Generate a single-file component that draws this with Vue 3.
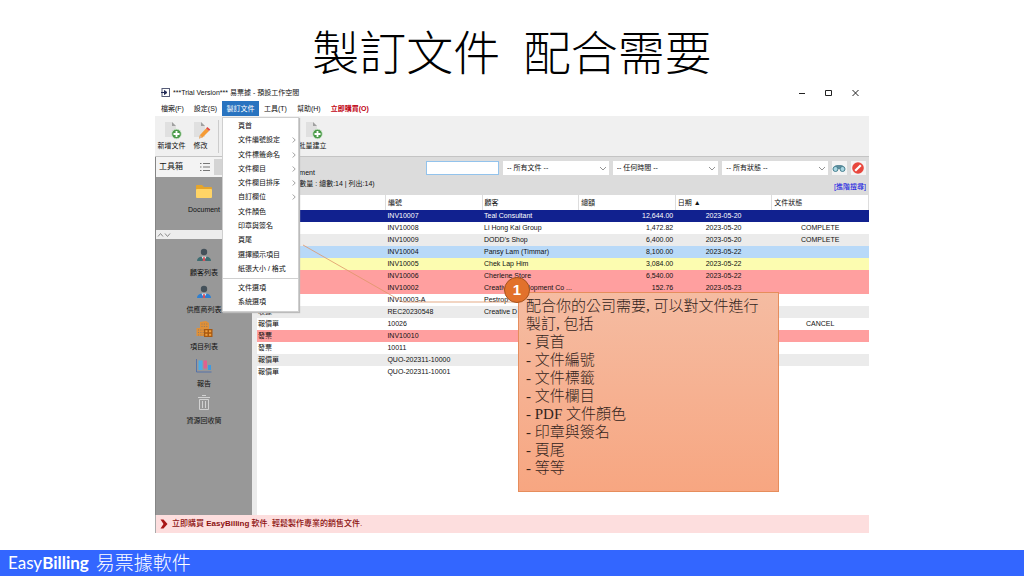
<script setup>
import { ref } from 'vue'

const menuItems = [
  { label: '頁首' },
  { label: '文件編號設定', sub: true },
  { label: '文件標籤命名', sub: true },
  { label: '文件欄目', sub: true },
  { label: '文件欄目排序', sub: true },
  { label: '自訂欄位', sub: true },
  { label: '文件顏色' },
  { label: '印章與簽名' },
  { label: '頁尾' },
  { label: '選擇顯示項目' },
  { label: '紙張大小 / 格式' }
]
const optionItems = ['文件選項', '系統選項']

const rows = [
  { type: '', no: 'INV10007', customer: 'Teal Consultant', total: '12,644.00', date: '2023-05-20', status: '', tone: 'selected' },
  { type: '', no: 'INV10008', customer: 'Li Hong Kai Group', total: '1,472.82', date: '2023-05-20', status: 'COMPLETE', tone: '' },
  { type: '', no: 'INV10009', customer: "DODD's Shop", total: '6,400.00', date: '2023-05-20', status: 'COMPLETE', tone: 'grey' },
  { type: '', no: 'INV10004', customer: 'Pansy Lam (Timmar)', total: '8,100.00', date: '2023-05-22', status: '', tone: 'blue' },
  { type: '', no: 'INV10005', customer: 'Chek Lap Him', total: '3,084.00', date: '2023-05-22', status: '', tone: 'yellow' },
  { type: '', no: 'INV10006', customer: 'Cherlene Store', total: '6,540.00', date: '2023-05-22', status: '', tone: 'red' },
  { type: '', no: 'INV10002', customer: 'Creative Development Co ...', total: '152.76', date: '2023-05-23', status: '', tone: 'red' },
  { type: '', no: 'INV10003-A', customer: 'Pestrop', total: '', date: '', status: '', tone: '' },
  { type: '收據', no: 'REC20230548', customer: 'Creative D', total: '', date: '', status: '', tone: 'grey' },
  { type: '報價單', no: '10026', customer: '', total: '', date: '', status: 'CANCEL', tone: '' },
  { type: '發票', no: 'INV10010', customer: '', total: '', date: '', status: '', tone: 'red' },
  { type: '發票', no: '10011', customer: '', total: '', date: '', status: '', tone: '' },
  { type: '報價單', no: 'QUO-202311-10000', customer: '', total: '', date: '', status: '', tone: 'grey' },
  { type: '報價單', no: 'QUO-202311-10001', customer: '', total: '', date: '', status: '', tone: '' }
]

const filters = ['-- 所有文件 --', '-- 任何時間 --', '-- 所有狀態 --']
const filterNames = ['文件', '時間', '狀態']
const points = ['頁首', '文件編號', '文件標籤', '文件欄目', 'PDF 文件顏色', '印章與簽名', '頁尾', '等等']
const keyword = ref('')
</script>

<template>
  <main class="slide">
    <h1 class="title">製訂文件&nbsp; 配合需要</h1>

    <section class="window">
      <header class="titlebar">
        <svg class="app-icon" viewBox="0 0 9 9"><rect x="1" y="0.500" width="7.500" height="8" fill="#fff" stroke="#555b77" /><path d="M0 4.500h4M3.500 2.500L6 4.500 3.500 6.500z" fill="#222a55" stroke="#222a55" /></svg>
        <span class="caption">***Trial Version*** 易票據 - 預設工作空間</span>
        <div class="controls">
          <button aria-label="最小化"><svg viewBox="0 0 10 10"><path d="M2 5.500h6" /></svg></button>
          <button aria-label="最大化"><svg viewBox="0 0 10 10"><path d="M1.500 2.500h6v5h-6z" /></svg></button>
          <button aria-label="關閉"><svg viewBox="0 0 10 10"><path d="M1.500 2l6 6M7.500 2l-6 6" /></svg></button>
        </div>
      </header>

      <nav class="menubar">
        <button class="wide">檔案(F)</button>
        <button class="wide">設定(S)</button>
        <div class="menu-host">
          <button class="active">製訂文件</button>
          <div class="popup">
            <div class="group main-group">
              <button v-for="m in menuItems" :key="m.label">
                <span>{{ m.label }}</span>
                <svg v-if="m.sub" viewBox="0 0 4 6"><path d="M0.700 0.500l2.500 2.500-2.500 2.500" /></svg>
              </button>
            </div>
            <div class="group option-group">
              <button v-for="o in optionItems" :key="o"><span>{{ o }}</span></button>
            </div>
          </div>
        </div>
        <button class="item">工具(T)</button>
        <button class="item">幫助(H)</button>
        <button class="item buy">立即購買(O)</button>
      </nav>

      <div class="toolbar">
        <button class="tool">
          <svg viewBox="0 0 20 20"><path d="M3 2h7l4 4v11H3z" fill="#e0e0e0" /><path d="M10 2l4 4h-4z" fill="#a0a0a0" /><circle cx="14.500" cy="14" r="4.800" fill="#4a9a48" stroke="#cfe6ce" stroke-width=".8" /><path d="M14.500 11v6M11.500 14h6" stroke="#fff" stroke-width="1.800" /></svg>
          <span>新增文件</span>
        </button>
        <button class="tool">
          <svg viewBox="0 0 20 20"><path d="M3 2h7l4 4v11H3z" fill="#e0e0e0" /><path d="M10 2l4 4h-4z" fill="#a0a0a0" /><path d="M9 15l6-6.500 3 2.500-6.500 6.500-3.500 1z" fill="#f59b35" /><path d="M15 8.500l1.300-1.500 3 2.500-1.300 1.500z" fill="#df4c45" /><path d="M9 15l2.500 2.500-3.500 1z" fill="#e0b48c" /></svg>
          <span>修改</span>
        </button>
        <span class="rule"></span>
        <button class="tool batch">
          <svg viewBox="0 0 20 20"><path d="M3 2h7l4 4v11H3z" fill="#e0e0e0" /><path d="M10 2l4 4h-4z" fill="#a0a0a0" /><circle cx="14.500" cy="14" r="4.800" fill="#4a9a48" stroke="#cfe6ce" stroke-width=".8" /><path d="M14.500 11v6M11.500 14h6" stroke="#fff" stroke-width="1.800" /></svg>
          <span>批量建立</span>
        </button>
      </div>

      <div class="body">
        <aside class="sidebar">
          <div class="side-head">
            <span>工具箱</span>
            <button class="list-btn" aria-label="清單"><svg viewBox="0 0 12 10"><path d="M4 1.500h7M4 5h7M4 8.500h7" stroke="#777" /><path d="M1 1.500h1.500M1 5h1.500M1 8.500h1.500" stroke="#777" /></svg></button>
            <span class="toggle"></span>
          </div>
          <div class="panel docs">
            <button class="side-item">
              <svg viewBox="0 0 18 18"><path d="M1 3q0-1 1-1h5l2 2h7q1 0 1 1v9H1z" fill="#e5a52b" /><path d="M1 7q0-1 1-1h14q1 0 1 1v7q0 1-1 1H2q-1 0-1-1z" fill="#ffd466" /></svg>
              <span>Document</span>
            </button>
          </div>
          <div class="splitter"><svg viewBox="0 0 14 6"><path d="M1 4.500l2.500-3 2.500 3M8 1.500l2.500 3 2.500-3" fill="none" stroke="#8b8b8b" /></svg></div>
          <div class="panel lists">
            <button class="side-item">
              <svg viewBox="0 0 18 18"><circle cx="9" cy="6" r="3.200" fill="#44515a" /><path d="M2 15q0-4 5-4.500h4q5 .5 5 4.500z" fill="#3f6d72" /><path d="M6.500 10.500h5L9 15z" fill="#eee" /><path d="M8.300 11h1.400l.6 4H7.700z" fill="#d4505a" /></svg>
              <span>顧客列表</span>
            </button>
            <button class="side-item">
              <svg viewBox="0 0 18 18"><circle cx="9" cy="6" r="3.200" fill="#44515a" /><path d="M2 15q0-4 5-4.500h4q5 .5 5 4.500z" fill="#2f7fd0" /><path d="M6.500 10.500h5L9 15z" fill="#eee" /><path d="M8.300 11h1.400l.6 4H7.700z" fill="#d4505a" /></svg>
              <span>供應商列表</span>
            </button>
            <button class="side-item">
              <svg viewBox="0 0 18 18"><path d="M5 2l6-1 3 2v6H5zM1.500 8h12v8h-12z" fill="#e09038" /><path d="M6.500 4h7M6.500 6.500h7M3 10h7M3 12.500h6M3 15h6" stroke="#8e7a66" stroke-dasharray="1 1.400" /><rect x="9" y="9" width="8.500" height="8" fill="#a8580f" /><path d="M10.300 10.300h2.200v2h-2.200zM14 10.300h2.200v2H14zM10.300 13.800h2.200v2h-2.200zM14 13.800h2.200v2H14z" fill="#f0a040" /></svg>
              <span>項目列表</span>
            </button>
            <button class="side-item">
              <svg viewBox="0 0 18 18"><path d="M1.500 2v13h15" fill="none" stroke="#5673a8" /><path d="M3.500 3.500h4v9.500h-4z" fill="#4cace8" /><path d="M8.500 3.500h3.500v8h-3.500z" fill="#e0608f" /><path d="M13 8h3v5h-3z" fill="#3f9ae0" /></svg>
              <span>報告</span>
            </button>
            <button class="side-item">
              <svg viewBox="0 0 18 18"><path d="M3 3.500h12M7 1.500h4M4.500 5.500h9v10h-9zM7.500 7v7M10.500 7v7" fill="none" stroke="#d2d2d2" /></svg>
              <span>資源回收筒</span>
            </button>
          </div>
        </aside>

        <section class="content">
          <div class="filterbar">
            <div class="summary">
              <span>Document</span>
              <span>項目(數量 : 總數:14 | 列出:14)</span>
            </div>
            <div class="filters">
              <div class="filter-row">
                <input v-model="keyword" class="search" type="text" aria-label="搜尋" />
                <div v-for="(f, i) in filters" :key="f" class="pick">
                  <select :aria-label="filterNames[i]"><option>{{ f }}</option></select>
                  <svg viewBox="0 0 8 5"><path d="M1 1l3 3 3-3" /></svg>
                </div>
                <button class="icon-btn" aria-label="尋找"><svg viewBox="0 0 14 14"><path d="M2 6q1-2 3-2h4q2 0 3 2v2H2z" fill="#5f8d9c" /><circle cx="3.500" cy="8" r="2.500" fill="#a9d6e2" stroke="#47808f" /><circle cx="10.500" cy="8" r="2.500" fill="#a9d6e2" stroke="#47808f" /></svg></button>
                <button class="icon-btn" aria-label="清除"><svg viewBox="0 0 14 14"><circle cx="7" cy="7" r="5.800" fill="#e8473d" /><path d="M4.200 9.800l5.600-5.600" stroke="#fff" stroke-width="2.200" /></svg></button>
              </div>
              <a class="advanced" href="#">[進階搜尋]</a>
            </div>
          </div>
          <table>
            <thead>
              <tr><th class="first"></th><th>編號</th><th>顧客</th><th>總額</th><th>日期 ▲</th><th>文件狀態</th></tr>
            </thead>
            <tbody>
              <tr v-for="r in rows" :key="r.no" :class="r.tone">
                <td>{{ r.type }}</td>
                <td>{{ r.no }}</td>
                <td class="customer">{{ r.customer }}</td>
                <td class="amount">{{ r.total }}</td>
                <td class="center">{{ r.date }}</td>
                <td class="center">{{ r.status }}</td>
              </tr>
            </tbody>
          </table>
        </section>
      </div>

      <footer class="notice">
        <svg viewBox="0 0 8 10"><path d="M0.500 0.500h3l4 4.500-4 4.500h-3l3-4.500z" fill="#a81616" /></svg>
        <span>立即購買 <b>EasyBilling</b> 軟件. 輕鬆製作專業的銷售文件.</span>
      </footer>

      <svg class="connector" viewBox="0 0 230 64"><path d="M1 2l100 57h117" /></svg>
      <div class="callout">
        <span class="badge">1</span>
        <p>配合你的公司需要, 可以對文件進行製訂, 包括</p>
        <p v-for="p in points" :key="p">- {{ p }}</p>
      </div>
    </section>

    <footer class="brand"><span>Easy<b>Billing</b></span><span class="zh">易票據軟件</span></footer>
  </main>
</template>

<style>
body { margin: 0; background: #fff; }
</style>

<style scoped>
* { box-sizing: border-box; }
button, input, select { font: inherit; color: inherit; margin: 0; padding: 0; border: 0; background: none; border-radius: 0; }
button { cursor: pointer; white-space: nowrap; }
svg { display: block; flex: none; }
p { margin: 0; }

.slide {
  min-height: 100vh;
  display: flex;
  flex-direction: column;
  background: #fff;
  color: #111;
  font-family: "Liberation Sans", "Noto Sans CJK TC", sans-serif;
}
.title {
  margin: 0;
  padding-top: 23px;
  height: 84px;
  text-align: center;
  font: 300 47px/62px "Liberation Serif", "Noto Sans CJK TC", sans-serif;
  color: #000;
}
.window {
  position: relative;
  flex: 1;
  display: flex;
  flex-direction: column;
  margin: 0 155px 17px;
  font-size: 7px;
  line-height: 12px;
}
.titlebar { display: flex; align-items: center; height: 17px; padding-left: 6px; }
.app-icon { width: 9px; height: 9px; margin-right: 3px; }
.controls { margin-left: auto; display: flex; gap: 17px; padding-right: 8px; }
.controls svg { width: 10px; height: 10px; fill: none; stroke: #222; }

.menubar { display: flex; height: 15px; padding-left: 1px; }
.menubar > button, .active { height: 15px; }
.menubar > .wide { width: 33px; }
.menubar > .item { padding: 0 5px; }
.menu-host { position: relative; }
.active { background: #2873c0; color: #fff; width: 37px; }
.menubar > .buy { color: #c00010; font-weight: 700; }
.popup {
  position: absolute;
  z-index: 3;
  left: 0;
  top: 16px;
  width: 77px;
  background: #fff;
  border: 1px solid #cfcfcf;
  box-shadow: 1px 1px 1px #bbb;
}
.group { display: grid; grid-auto-rows: 1fr; }
.main-group { height: 160px; padding: 1px 0 2px; }
.option-group { height: 33px; padding: 2px 0 2px; border-top: 1px solid #d0d0d0; }
.group button { display: flex; align-items: center; justify-content: space-between; padding: 0 2px 0 15px; }
.group svg { width: 4px; height: 6px; fill: none; stroke: #777; stroke-width: .7; }

.toolbar { display: flex; height: 41px; padding: 4px 0 0 1px; background: #f0f0f0; border-bottom: 1px solid #c4c4c4; }
.tool { display: flex; flex-direction: column; align-items: center; width: 31px; }
.tool + .tool { width: 27px; }
.tool svg { width: 20px; height: 20px; }
.rule { width: 1px; height: 33px; margin-left: 4px; background: #ccc; }
.tool.batch { margin-left: 78px; }

.body { flex: 1; display: flex; }
.sidebar { width: 97px; flex: none; display: flex; flex-direction: column; border-left: 1px solid #858585; }
.side-head { display: flex; align-items: center; height: 20px; padding-left: 3px; background: #f3f3f3; font-size: 8px; }
.list-btn { margin-left: 16px; }
.list-btn svg { width: 12px; height: 10px; }
.toggle { align-self: stretch; flex: 1; margin: 2px 0 2px 3px; background: #d4d4d4; }
.panel { background: #989898; }
.docs { height: 53px; padding-top: 6px; }
.splitter { height: 9px; padding: 2px 0 0 1px; background: #ededed; }
.splitter svg { width: 14px; height: 6px; }
.lists { flex: 1; padding-top: 7px; }
.side-item { display: flex; flex-direction: column; align-items: center; width: 100%; height: 37px; gap: 3px; }
.side-item svg { width: 18px; height: 18px; }

.content { flex: 1; min-width: 0; margin-left: 5px; box-shadow: -5px 0 #ebebeb; }
.filterbar { display: flex; height: 38px; background: #dcdcdc; }
.summary { display: flex; flex-direction: column; flex: 0 0 169px; padding: 10px 0 0 26px; line-height: 11px; white-space: nowrap; }
.filters { flex: 1; display: flex; flex-direction: column; padding: 4px 3px 0 0; }
.filter-row { display: flex; height: 14px; gap: 4px; }
.search { width: 73px; background: #fff; border: 1px solid #93c3ec; padding: 0 3px; }
.pick { position: relative; flex: 1; background: #fff; }
.pick select { appearance: none; width: 100%; height: 14px; padding: 0 10px 0 4px; line-height: 14px; }
.pick svg { position: absolute; right: 2px; top: 5px; width: 8px; height: 5px; fill: none; stroke: #777; stroke-width: .8; pointer-events: none; }
.icon-btn { width: 15px; background: #f4f4f4; }
.icon-btn svg { width: 14px; height: 14px; }
.advanced { align-self: flex-end; margin-top: 6px; color: #1010e0; text-decoration: none; line-height: 12px; }

table { width: 100%; border-collapse: collapse; table-layout: fixed; background: #fff; }
th, td { padding: 0 2px; text-align: left; white-space: nowrap; font-weight: 400; overflow: hidden; }
th { height: 15px; border-right: 1px solid #ddd; }
th.first { width: 21%; }
td { height: 12px; line-height: 12px; }
td:first-child { padding-left: 1px; }
td.customer { overflow: visible; }
.amount { text-align: right; }
.center { text-align: center; }
.selected { background: #11218f; color: #fff; }
.grey { background: #ebebeb; }
.blue { background: #b8d9f8; }
.yellow { background: #fcfcb0; }
.red { background: #ff9f9f; }

.notice { display: flex; align-items: center; height: 18px; gap: 4px; padding-left: 4px; background: #fddede; color: #8c1010; font-size: 8px; font-weight: 500; border-left: 1px solid #aaa; }
.notice svg { width: 8px; height: 10px; }

.connector { position: absolute; z-index: 4; left: 147px; top: 159px; width: 230px; height: 64px; fill: none; stroke: #e0976a; stroke-width: 1; opacity: .8; }
.callout {
  position: absolute;
  z-index: 5;
  left: 363px;
  top: 208px;
  width: 261px;
  padding: 4px 8px 14px 7px;
  border: 1px solid #e68d5c;
  background: linear-gradient(#f5bca2, #f7a681);
  font: 300 15px/18px "Liberation Serif", "Noto Sans CJK TC", sans-serif;
  color: #33241c;
}
.badge {
  position: absolute;
  left: -15px;
  top: -16px;
  width: 26px;
  height: 26px;
  border-radius: 50%;
  border: 1px solid #a5521c;
  background: #e2712b;
  color: #fff;
  text-align: center;
  font: 700 15px/24px "Liberation Sans", sans-serif;
}

.brand {
  display: flex;
  align-items: center;
  gap: 7px;
  height: 26px;
  padding-left: 8px;
  background: #3366ff;
  color: #fff;
  font: 400 17px/26px Lato, "Noto Sans CJK TC", sans-serif;
}
.zh { font-size: 19px; font-weight: 300; }
</style>
